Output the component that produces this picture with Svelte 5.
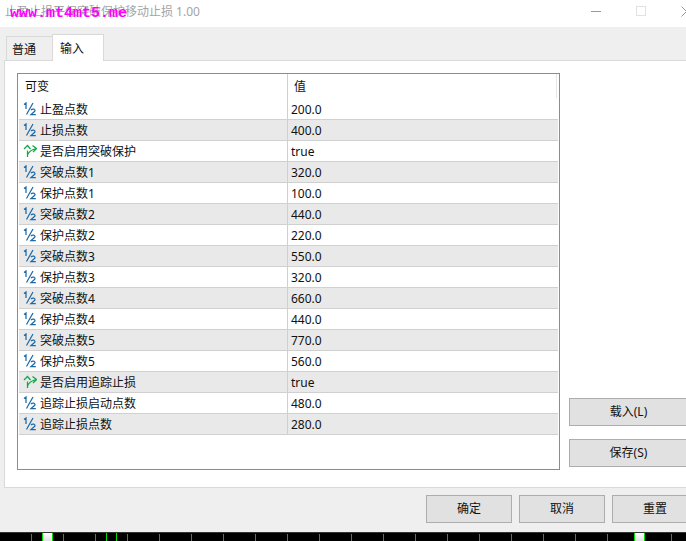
<script>
  const half = 'half';
  const arrow = 'arrow';
  const rows = [
    [half, '止盈点数', '200.0'],
    [half, '止损点数', '400.0'],
    [arrow, '是否启用突破保护', 'true'],
    [half, '突破点数1', '320.0'],
    [half, '保护点数1', '100.0'],
    [half, '突破点数2', '440.0'],
    [half, '保护点数2', '220.0'],
    [half, '突破点数3', '550.0'],
    [half, '保护点数3', '320.0'],
    [half, '突破点数4', '660.0'],
    [half, '保护点数4', '440.0'],
    [half, '突破点数5', '770.0'],
    [half, '保护点数5', '560.0'],
    [arrow, '是否启用追踪止损', 'true'],
    [half, '追踪止损启动点数', '480.0'],
    [half, '追踪止损点数', '280.0']
  ];
  const ticks = [31, 63, 95, 127, 159, 191, 223, 255, 287, 319, 351, 383, 415, 447, 479, 511, 543, 575, 607, 671];
</script>

<div class="win">
  <header class="title">
    <span class="title-text">止盈止损平保突破保护移动止损 1.00</span>
    <span class="mark">www.mt4mt5.me</span>
    <div class="controls">
      <i class="min"></i>
      <i class="max"></i>
      <svg class="close" width="6" height="11" viewBox="0 0 6 11"><path d="M0.5 0.5 L5.5 5.5 L0.5 10.5" fill="none" stroke="#999" stroke-width="1" /></svg>
    </div>
  </header>

  <div class="tabs">
    <div class="tab">普通</div>
    <div class="tab active">输入</div>
  </div>

  <section class="panel">
    <div class="table">
      <div class="head">
        <div class="c1">可变</div>
        <div class="c2">值</div>
      </div>
      {#each rows as r}
        <div class="row">
          <div class="c1">
            {#if r[0] === 'half'}
              <span class="frac"><svg width="14" height="14" viewBox="0 0 14 14"><path d="M1 2.5 L3 1 V7 M10 1 L3.5 12.5 M8 8 Q9 6.8 11 7.2 Q12.6 8 11.5 9.6 L8 12.5 H12.8" fill="none" stroke="#1c6aa8" stroke-width="1.25" /></svg></span>
            {:else}
              <span class="frac"><svg width="14" height="14" viewBox="0 0 14 14"><path d="M4.5 13 V6.5 M1 5 L4.5 1.5 L7.5 5 M4.5 11 Q6 6.5 13 4.5 M9.5 1.5 L13.5 4.5 L10 8" fill="none" stroke="#12a845" stroke-width="1.25" /></svg></span>
            {/if}
            <span class="name">{r[1]}</span>
          </div>
          <div class="c2 val">{r[2]}</div>
        </div>
      {/each}
    </div>

    <div class="side">
      <button>载入(L)</button>
      <button>保存(S)</button>
    </div>
  </section>

  <footer class="foot">
    <button>确定</button>
    <button>取消</button>
    <button>重置</button>
  </footer>

  <div class="strip">
    {#each ticks as t}<i class="tick" style="left:{t}px"></i>{/each}
    <i class="gap" style="left:42px"></i>
    <i class="green" style="left:106px"></i>
    <i class="green" style="left:116px"></i>
    <i class="gap" style="left:634px"></i>
  </div>
</div>

<style>
  :global(body) { margin: 0; background: #fff; }
  .win {
    width: 686px; height: 541px; overflow: hidden; display: flex; flex-direction: column;
    background: #efefef; color: #111;
    font: 12px/16px "Noto Sans", "Noto Sans CJK SC", sans-serif;
  }
  .title { height: 27px; background: #fff; position: relative; flex: none; }
  .title-text { position: absolute; left: 5px; top: 3px; color: #a4a4a4; font-size: 12px; line-height: 18px; }
  .mark { position: absolute; left: 10px; top: 5px; color: #ff00ff; font: bold 15px/17px "Liberation Mono", monospace; }
  .controls { position: absolute; inset: 0; }
  .min { position: absolute; left: 591px; top: 11px; width: 10px; height: 1px; background: #9a9a9a; }
  .max { position: absolute; left: 636px; top: 6px; width: 8px; height: 8px; border: 1px solid #e2e2e2; }
  .close { position: absolute; left: 681px; top: 6px; }

  .tabs { height: 33px; display: flex; align-items: flex-end; padding-left: 6px; flex: none; }
  .tab {
    width: 47px; height: 24px; box-sizing: border-box; padding-left: 5px; line-height: 26px;
    background: #efefef; border: 1px solid #d9d9d9; border-bottom: 0; font-size: 12px;
  }
  .tab + .tab { margin-left: -1px; }
  .tab.active {
    width: 52px; height: 27px; padding-left: 7px; background: #fff; position: relative; top: 1px; line-height: 27px; z-index: 1;
  }

  .panel {
    flex: none; height: 428px; margin-left: 4px; box-sizing: border-box;
    background: #fff; border: 1px solid #d9d9d9; border-right: 0; position: relative;
    display: flex; padding: 12px 0 0 12px;
  }
  .table {
    width: 543px; height: 397px; box-sizing: border-box; border: 1px solid #8c8c90; flex: none;
    padding: 0 1px;
  }
  .head { height: 25px; display: flex; line-height: 25px; }
  .head .c1 { padding-left: 6px; }
  .head .c2 { padding-left: 6px; }
  .row { height: 21px; display: flex; box-sizing: border-box; line-height: 22px; border-bottom: 1px solid #d0d0d0; width: 539px; }
  .row:nth-child(odd) { background: #e9e9e9; }
  .c1 { width: 269px; display: flex; align-items: center; box-sizing: border-box; border-right: 1px solid #d0d0d0; }
  .c2 { flex: 1; padding-left: 3px; box-sizing: border-box; }
  .head .c2 { border-right: 1px solid #e6e6e6; margin-right: 1px; height: 24px; }
  .frac { width: 21px; padding-left: 4px; box-sizing: border-box; display: flex; flex: none; }
  .name { white-space: nowrap; padding-top: 2px; }

  .side { flex: none; margin-left: 9px; padding-top: 325px; display: flex; flex-direction: column; gap: 13px; }
  button {
    box-sizing: border-box; background: #e1e1e1; border: 1px solid #adadad; color: #111; padding: 0;
    font: inherit; border-radius: 0;
  }
  .side button { width: 122px; height: 28px; padding-right: 3px; }
  .foot { flex: 1; display: flex; gap: 7px; padding: 7px 0 0 426px; align-items: flex-start; }
  .foot button { width: 86px; height: 28px; flex: none; }

  .strip { height: 9px; background: #000; position: relative; flex: none; border-top: 1px solid #333; box-sizing: border-box; }
  .tick { position: absolute; top: 1px; width: 1px; height: 8px; background: #666a75; }
  .gap { position: absolute; top: 0; width: 11px; height: 9px; box-sizing: border-box; background: linear-gradient(#fff, #ddd); border: solid #00e000; border-width: 0 1px; }
  .green { position: absolute; top: 0; width: 1px; height: 9px; background: #00e000; }
</style>
